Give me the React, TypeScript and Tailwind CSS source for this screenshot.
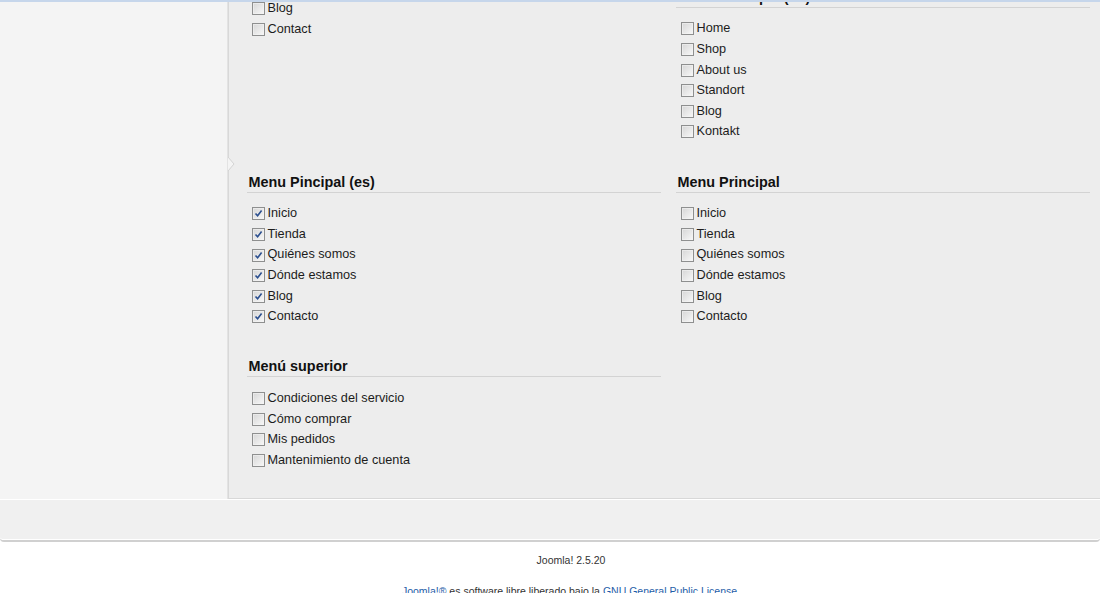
import React from 'react';

type Item = { label: string; checked?: boolean };
type Section = { title: string; items: Item[] };

const plain = (labels: string[], checked = false): Item[] => labels.map((label) => ({ label, checked }));

// rows of the menu-assignment grid; the first row is scrolled partly out of view
const rows: { left: Section[]; right: Section[] }[] = [
  {
    left: [{ title: 'Main Menu (en)', items: plain(['Home', 'Shop', 'About us', 'Where we are', 'Blog', 'Contact']) }],
    right: [
      { title: 'Top Menu (en)', items: plain(['Terms of service', 'How to buy']) },
      { title: 'Menu Principal (de)', items: plain(['Home', 'Shop', 'About us', 'Standort', 'Blog', 'Kontakt']) },
    ],
  },
  {
    left: [
      {
        title: 'Menu Pincipal (es)',
        items: plain(['Inicio', 'Tienda', 'Quiénes somos', 'Dónde estamos', 'Blog', 'Contacto'], true),
      },
    ],
    right: [{ title: 'Menu Principal', items: plain(['Inicio', 'Tienda', 'Quiénes somos', 'Dónde estamos', 'Blog', 'Contacto']) }],
  },
  {
    left: [
      {
        title: 'Menú superior',
        items: plain(['Condiciones del servicio', 'Cómo comprar', 'Mis pedidos', 'Mantenimiento de cuenta']),
      },
    ],
    right: [],
  },
];

function Checkbox({ checked }: { checked?: boolean }) {
  return (
    <span className="relative inline-block h-[13px] w-[13px] shrink-0 border border-[#8e8f8f] bg-[linear-gradient(135deg,#d6d6d6,#f8f8f8)]">
      <span className="absolute inset-0 border border-[#f4f4f4]/60" />
      {checked && (
        <svg viewBox="0 0 11 11" className="absolute inset-0 h-[11px] w-[11px]">
          <path d="M2.5 5.5 L4.6 7.8 L8.6 2.6" fill="none" stroke="#2b4f8f" strokeWidth="1.6" />
        </svg>
      )}
    </span>
  );
}

function MenuSection({ section }: { section: Section }) {
  return (
    <div>
      <h3 className="border-b border-[#d3d3d3] pt-px pl-[1.5px] text-[14.4px] leading-[19px] font-bold text-[#111]">
        {section.title}
      </h3>
      <ul className="mt-[11px]">
        {section.items.map((it) => (
          <li key={it.label} className="flex h-[20.6px] items-center gap-[3px] pl-[4.5px] text-[12.7px] text-[#1c1c1c]">
            <Checkbox checked={it.checked} />
            <span>{it.label}</span>
          </li>
        ))}
      </ul>
    </div>
  );
}

export default function App() {
  return (
    <div className="relative h-[593px] overflow-hidden bg-white font-['Liberation_Sans',Arial,sans-serif]">
      <div className="absolute inset-x-0 top-0 z-10 h-[2px] bg-[#c6d6eb]" />

      <div className="flex">
        <aside className="w-[228px] shrink-0 border-r border-[#e3e3e3] bg-[#f4f4f4]" />
        <main className="relative flex-1 border-b border-l border-[#d8d8d8] bg-[#ededed] pr-[10px] pb-[27px] pl-[18px]">
          <svg viewBox="0 0 7 14" className="absolute top-[157px] left-[-1px] h-[14px] w-[7px]">
            <path d="M0 0 L6 7 L0 14 Z" fill="#f4f4f4" />
            <path d="M0 0 L6 7 L0 14" fill="none" stroke="#d3d3d3" strokeWidth="1" />
          </svg>
          <div className="-mt-[116px] flex flex-col gap-y-[29.4px]">
            {rows.map((row, i) => (
              <div key={i} className="grid grid-cols-2 items-start gap-x-[15px]">
                <div className="flex flex-col gap-y-[29.4px]">
                  {row.left.map((s) => (
                    <MenuSection key={s.title} section={s} />
                  ))}
                </div>
                <div className="flex flex-col gap-y-[29.4px]">
                  {row.right.map((s) => (
                    <MenuSection key={s.title} section={s} />
                  ))}
                </div>
              </div>
            ))}
          </div>
        </main>
      </div>

      <div className="h-[43px] rounded-b-[4px] border-t border-b-2 border-t-white border-b-[#d0d0d0] bg-[#f0f0f0] shadow-[inset_0_-1px_0_#fff]" />

      <footer className="pl-[42px] text-center text-[10.5px] text-[#333]">
        <p className="mt-[12px] leading-[13px]">Joomla! 2.5.20</p>
        <p className="mt-[18px] leading-[13px]">
          <a className="text-[#1f5ea8]">Joomla!®</a> es software libre liberado bajo la{' '}
          <a className="text-[#1f5ea8]">GNU General Public License.</a>
        </p>
      </footer>
    </div>
  );
}
